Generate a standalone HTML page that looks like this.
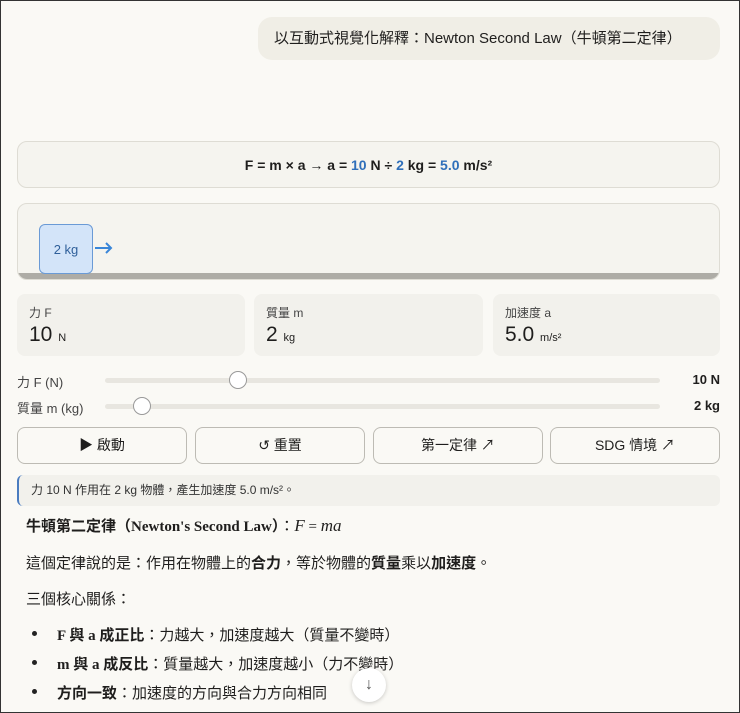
<!DOCTYPE html>
<html><head><meta charset="utf-8"><style>
*{box-sizing:border-box;margin:0;padding:0}
html,body{width:740px;height:713px;overflow:hidden}
body{background:#faf9f5;font-family:"Liberation Sans","Noto Sans CJK TC",sans-serif;color:#1f1e1d;position:relative;border:1px solid #333}
.abs{position:absolute}
.bubble{left:257px;top:16px;width:462px;height:43px;background:#f0eee6;border-radius:14px;font-size:15px;line-height:43px;padding-left:16px}
.formula{left:16px;top:140px;width:703px;height:47px;border:1px solid #dedcd4;border-radius:10px;background:#f5f4ef;text-align:center;line-height:46px;font-size:14px;font-weight:bold}
.b{color:#2f6fba}
.sim{left:16px;top:202px;width:703px;height:77px;border:1px solid #dedcd4;border-radius:10px;background:#f5f4ef;overflow:hidden}
.ground{left:0;bottom:0;width:100%;height:6px;background:#aeaca6}
.blk{left:21px;top:20px;width:54px;height:50px;background:#d3e4f9;border:1px solid #6a9ad6;border-radius:6px;color:#2f5f9a;font-size:13px;text-align:center;line-height:50px}
.card{top:293px;height:62px;background:#f2f1ec;border-radius:8px;padding:10px 12px}
.card .l{font-size:12px;color:#444}
.card .v{font-size:21px;margin-top:2px}
.card .v small{font-size:11px}
.lab{left:16px;font-size:13px;color:#444}
.track{left:104px;width:555px;height:5px;background:#e8e6e0;border-radius:3px}
.knob{width:18px;height:18px;border-radius:50%;background:#fff;border:1px solid #999}
.val{right:19px;font-size:13px;font-weight:bold}
.btn{top:426px;width:170px;height:37px;border:1px solid #bdbbb4;border-radius:8px;background:#faf9f5;text-align:center;line-height:35px;font-size:14px}
.note{left:16px;top:474px;width:703px;height:31px;background:#f2f1ec;border-left:2px solid #4a7cc0;border-radius:6px;font-size:12px;line-height:31px;padding-left:12px;color:#333}
.t{left:25px;font-size:15px;font-family:"Liberation Serif","Noto Sans CJK TC",sans-serif}
.t b{font-family:"Liberation Serif","Noto Sans CJK TC",serif}
.dot{position:absolute;left:6px;top:7px;width:5px;height:5px;border-radius:50%;background:#222}
</style></head><body>
<div class="abs bubble">以互動式視覺化解釋：Newton Second Law（牛頓第二定律）</div>
<div class="abs formula">F = m × a <span style="font-weight:normal">→</span> a = <span class="b">10</span> N ÷ <span class="b">2</span> kg = <span class="b">5.0</span> m/s²</div>
<div class="abs sim"><div class="abs ground"></div><div class="abs blk">2 kg</div>
<svg class="abs" style="left:76px;top:37px" width="20" height="14"><path d="M1 7H17M12 2L17 7L12 12" stroke="#3a86d8" stroke-width="2" fill="none"/></svg></div>
<div class="abs card" style="left:16px;width:228px"><div class="l">力 F</div><div class="v">10 <small>N</small></div></div>
<div class="abs card" style="left:253px;width:229px"><div class="l">質量 m</div><div class="v">2 <small>kg</small></div></div>
<div class="abs card" style="left:492px;width:227px"><div class="l">加速度 a</div><div class="v">5.0 <small>m/s²</small></div></div>
<div class="abs lab" style="top:371px">力 F (N)</div>
<div class="abs track" style="top:377px"></div><div class="abs knob" style="left:228px;top:370px"></div>
<div class="abs val" style="top:371px">10 N</div>
<div class="abs lab" style="top:397px">質量 m (kg)</div>
<div class="abs track" style="top:403px"></div><div class="abs knob" style="left:132px;top:396px"></div>
<div class="abs val" style="top:397px">2 kg</div>
<div class="abs btn" style="left:16px">▶ 啟動</div>
<div class="abs btn" style="left:194px">↺ 重置</div>
<div class="abs btn" style="left:372px">第一定律 ↗</div>
<div class="abs btn" style="left:549px">SDG 情境 ↗</div>
<div class="abs note">力 10 N 作用在 2 kg 物體，產生加速度 5.0 m/s²。</div>
<div class="abs t" style="top:514px"><b>牛頓第二定律（Newton's Second Law）</b>：<i style="font-size:17px">F</i> = <i style="font-size:17px">ma</i></div>
<div class="abs t" style="top:551px">這個定律說的是：作用在物體上的<b>合力</b>，等於物體的<b>質量</b>乘以<b>加速度</b>。</div>
<div class="abs t" style="top:587px">三個核心關係：</div>
<div class="abs t" style="top:623px"><span class="dot"></span><span style="margin-left:31px"><b>F 與 a 成正比</b>：力越大，加速度越大（質量不變時）</span></div>
<div class="abs t" style="top:652px"><span class="dot"></span><span style="margin-left:31px"><b>m 與 a 成反比</b>：質量越大，加速度越小（力不變時）</span></div>
<div class="abs t" style="top:681px"><span class="dot"></span><span style="margin-left:31px"><b>方向一致</b>：加速度的方向與合力方向相同</span></div>
<div class="abs" style="left:351px;top:667px;width:34px;height:34px;border-radius:50%;background:#fff;box-shadow:0 1px 4px rgba(0,0,0,.2);text-align:center;line-height:34px;font-size:16px;color:#555">↓</div>
</body></html>
